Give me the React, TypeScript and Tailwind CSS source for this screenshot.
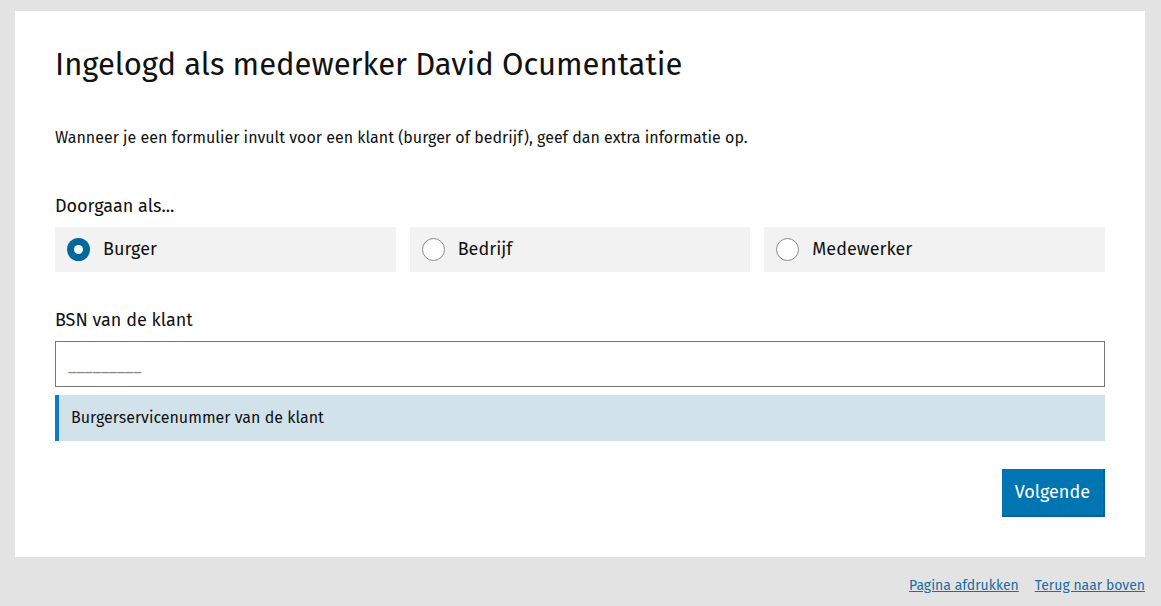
import React from 'react'

const font = { fontFamily: '"Fira Sans", "Open Sans", "Noto Sans", sans-serif' }

function Radio({ label, checked }: { label: string; checked?: boolean }) {
  return (
    <label className="flex h-[45px] flex-1 items-center bg-[#f2f2f2] pl-[12px]">
      {checked ? (
        <span className="flex h-[23px] w-[23px] items-center justify-center rounded-full bg-[#00689d]">
          <span className="h-[9px] w-[9px] rounded-full bg-white" />
        </span>
      ) : (
        <span className="h-[23px] w-[23px] rounded-full border border-[#8a8a8a] bg-white" />
      )}
      <span className="ml-[13px] text-[18px] text-[#111]">{label}</span>
    </label>
  )
}

export default function App() {
  return (
    <div className="min-h-[606px] bg-[#e3e3e3] pl-[15px] pr-[16px] pt-[11px]" style={font}>
      <main className="bg-white px-[40px] pb-[40px] pt-[34px]">
        <h1 className="text-[31px] leading-[40px] text-[#111]">Ingelogd als medewerker David Ocumentatie</h1>
        <p className="mt-[41px] text-[16px] leading-[24px] text-[#111]">
          Wanneer je een formulier invult voor een klant (burger of bedrijf), geef dan extra informatie op.
        </p>

        <fieldset className="mt-[43px]">
          <legend className="text-[18px] leading-[27px] text-[#111]">Doorgaan als...</legend>
          <div className="mt-[7px] flex gap-[14px]">
            <Radio label="Burger" checked />
            <Radio label="Bedrijf" />
            <Radio label="Medewerker" />
          </div>
        </fieldset>

        <div className="mt-[35px] text-[18px] leading-[27px] text-[#111]">BSN van de klant</div>
        <div className="mt-[7px] flex h-[46px] items-center border border-[#767676] px-[12px] pt-[4px]">
          <span className="text-[16px] text-[#8a8a8a]">_________</span>
        </div>
        <div className="mt-[8px] flex h-[46px] items-center border-l-4 border-[#0a7acb] bg-[#d2e2ea] pl-[12px] text-[16px] text-[#111]">
          Burgerservicenummer van de klant
        </div>

        <div className="mt-[28px] flex justify-end">
          <button className="h-[48px] border-b-2 border-r-2 border-[#00639a] bg-[#0075b1] px-[13px] text-[18px] text-white">
            Volgende
          </button>
        </div>
      </main>
      <footer className="flex justify-end gap-[16px] pt-[19px] text-[14px] leading-[20px] text-[#1b6ea3]">
        <a href="#" className="underline">Pagina afdrukken</a>
        <a href="#" className="underline">Terug naar boven</a>
      </footer>
    </div>
  )
}
